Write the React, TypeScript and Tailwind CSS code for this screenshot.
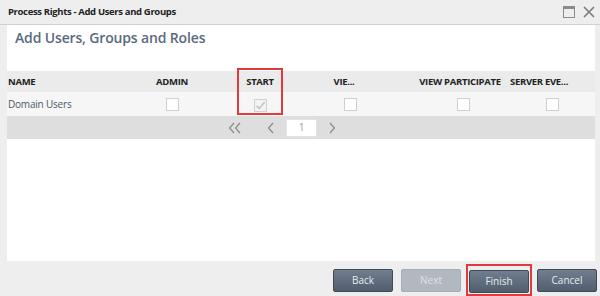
import React from 'react'

const FONT = { fontFamily: '"Open Sans", "Liberation Sans", sans-serif' }

function Box({ checked }: { checked?: boolean }) {
  return (
    <div
      className={
        'w-[13px] h-[13px] border flex items-center justify-center ' +
        (checked ? 'border-[#d0d0d0] bg-[#f3f3f3] mt-[2px]' : 'border-[#cfcfcf] bg-white')
      }
    >
      {checked && (
        <svg width="11" height="11" viewBox="0 0 11 11">
          <polyline points="1.5,5.8 4.3,8.4 9.6,2.2" fill="none" stroke="#c4c4c4" strokeWidth="1.6" />
        </svg>
      )}
    </div>
  )
}

function Btn({ label, disabled }: { label: string; disabled?: boolean }) {
  return (
    <button
      className={
        'w-[60px] h-[23px] rounded-[2px] border text-[10px] ' +
        (disabled
          ? 'border-[#a7adb5] bg-[#b2b8c0] text-[#dfe2e6]'
          : 'border-[#3f4957] bg-gradient-to-b from-[#717e8f] to-[#525e6e] text-[#e8ecf0]')
      }
    >
      {label}
    </button>
  )
}

export default function App() {
  const headers = [
    { label: 'ADMIN', w: 'w-[88px]' },
    { label: 'START', w: 'w-[88px]' },
    { label: 'VIE...', w: 'w-[80px] mr-[16px]' },
    { label: 'VIEW PARTICIPATE', w: 'w-[120px]' },
    { label: 'SERVER EVE...', w: 'w-[38px]' },
  ]
  const cells = ['w-[88px]', 'w-[88px]', 'w-[92px]', 'w-[134px]', 'w-[44px]']

  return (
    <div className="w-[600px] h-[296px] bg-[#eeeeee] flex flex-col overflow-hidden" style={FONT}>
      {/* title bar */}
      <div className="h-[25px] flex-none flex items-center justify-between pl-2 pr-[5px] border-b border-[#c9d2dc]">
        <span className="text-[9.5px] font-bold text-[#222] tracking-[-0.35px] pt-px">
          Process Rights - Add Users and Groups
        </span>
        <div className="flex items-center gap-[8px]">
          <div className="w-[12px] h-[12px] border border-[#8a8a8a] border-t-[3px]" />
          <svg width="12" height="12" viewBox="0 0 12 12">
            <path d="M1 1 L11 11 M11 1 L1 11" stroke="#7a7a7a" strokeWidth="1.6" />
          </svg>
        </div>
      </div>

      {/* panel */}
      <div className="h-[236px] flex-none pl-[7px] pr-[5px]">
        <div className="h-full bg-white relative">
          <h1 className="pl-2 pt-[3px] h-[46px] text-[14px] leading-[20px] font-semibold text-[#5a6a80] tracking-[-0.15px]">
            Add Users, Groups and Roles
          </h1>

          <div className="h-[21px] bg-[#ebebeb] flex items-center text-[9.5px] font-bold text-[#222] tracking-[-0.3px] pt-px">
            <div className="w-[121px] pl-px">NAME</div>
            {headers.map((h) => (
              <div key={h.label} className={h.w + ' flex-none flex justify-center whitespace-nowrap'}>
                {h.label}
              </div>
            ))}
          </div>

          <div className="h-[24px] bg-[#f6f6f6] flex items-center">
            <div className="w-[121px] pl-px text-[10px] text-[#4d5868] tracking-[-0.2px]">Domain Users</div>
            {cells.map((w, i) => (
              <div key={i} className={w + ' flex-none flex justify-center'}>
                <Box checked={i === 1} />
              </div>
            ))}
          </div>

          <div className="h-[23px] bg-[#dedede] flex items-center pl-[221px]">
            <svg width="14" height="12" viewBox="0 0 14 12">
              <polyline points="6,1 1.5,6 6,11" fill="none" stroke="#8a8a8a" strokeWidth="1.2" />
              <polyline points="12,1 7.5,6 12,11" fill="none" stroke="#8a8a8a" strokeWidth="1.2" />
            </svg>
            <svg width="8" height="12" viewBox="0 0 8 12" className="ml-[25px]">
              <polyline points="6,1 1.5,6 6,11" fill="none" stroke="#8a8a8a" strokeWidth="1.2" />
            </svg>
            <div className="ml-[11px] w-[31px] h-[18px] bg-white border border-[#e4e4e4] flex items-center justify-center text-[10px] text-[#a0a0a0]">
              1
            </div>
            <svg width="8" height="12" viewBox="0 0 8 12" className="ml-[11px]">
              <polyline points="2,1 6.5,6 2,11" fill="none" stroke="#8a8a8a" strokeWidth="1.2" />
            </svg>
          </div>

          {/* highlight around START column */}
          <div className="absolute left-[230px] top-[43px] w-[46px] h-[47px] border-2 border-[#e0393e]" />
        </div>
      </div>

      {/* footer buttons */}
      <div className="flex-1 flex items-end justify-end gap-[8px] pr-[3px]">
        <div className="mb-[4px]"><Btn label="Back" /></div>
        <div className="mb-[4px]"><Btn label="Next" disabled /></div>
        <div className="-mx-[3px] border-2 border-[#e0393e] p-px"><Btn label="Finish" /></div>
        <div className="mb-[4px]"><Btn label="Cancel" /></div>
      </div>
    </div>
  )
}
